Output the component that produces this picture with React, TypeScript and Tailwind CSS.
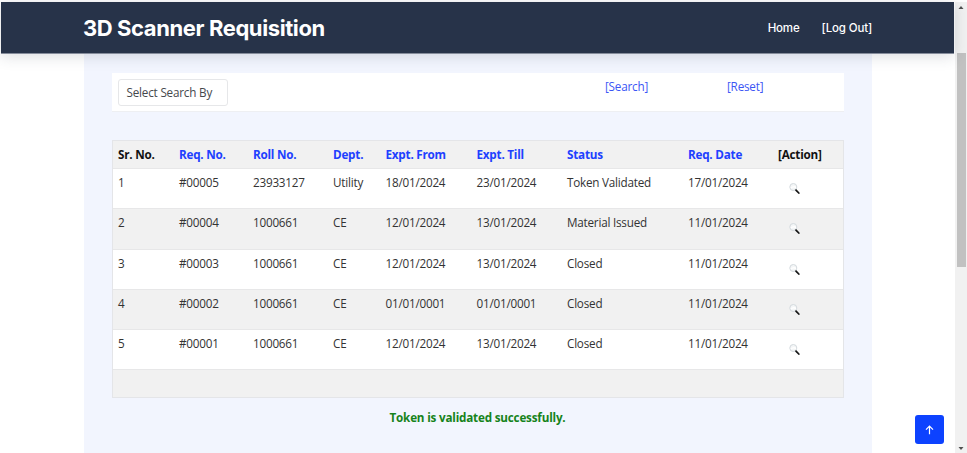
import React from "react";

type Row = {
  req: string;
  roll: string;
  dept: string;
  from: string;
  till: string;
  status: string;
  date: string;
};

const rows: Row[] = [
  { req: "#00005", roll: "23933127", dept: "Utility", from: "18/01/2024", till: "23/01/2024", status: "Token Validated", date: "17/01/2024" },
  { req: "#00004", roll: "1000661", dept: "CE", from: "12/01/2024", till: "13/01/2024", status: "Material Issued", date: "11/01/2024" },
  { req: "#00003", roll: "1000661", dept: "CE", from: "12/01/2024", till: "13/01/2024", status: "Closed", date: "11/01/2024" },
  { req: "#00002", roll: "1000661", dept: "CE", from: "01/01/0001", till: "01/01/0001", status: "Closed", date: "11/01/2024" },
  { req: "#00001", roll: "1000661", dept: "CE", from: "12/01/2024", till: "13/01/2024", status: "Closed", date: "11/01/2024" },
];

const sortable = ["Req. No.", "Roll No.", "Dept.", "Expt. From", "Expt. Till", "Status", "Req. Date"];

const columns = "grid grid-cols-[61px_74px_80px_52.5px_91px_90.5px_121px_90px_1fr] pl-[5px]";

function Magnifier() {
  return (
    <svg width="12" height="12" viewBox="0 0 12 12" className="block">
      <circle cx="4.3" cy="4" r="3.5" fill="#f4f6f7" stroke="#d3d9dd" strokeWidth="1" />
      <path d="M1.8 5.2C3 3.6 5.5 3.4 7 4.6" fill="none" stroke="#ffffff" strokeWidth="1.4" />
      <path d="M6.3 6.5l1 1" stroke="#777b7e" strokeWidth="1.2" />
      <path d="M7.2 7.3l2.6 2.7" stroke="#161616" strokeWidth="1.8" strokeLinecap="round" />
    </svg>
  );
}

function NavBar() {
  return (
    <header className="relative z-10 ml-px flex h-[52px] items-center justify-between border-b border-[#858c9b] bg-[#273349] pr-[82px] pl-[82px] font-[Inter,sans-serif] text-white shadow-[0_2px_14px_rgba(50,60,75,0.18)]">
      <h1 className="text-[22px] leading-none font-bold tracking-[-0.4px] whitespace-nowrap">3D Scanner Requisition</h1>
      <nav className="flex gap-[22px] pt-[2px] text-[11.5px] leading-none font-medium tracking-[-0.15px]">
        <a>Home</a>
        <a>[Log Out]</a>
      </nav>
    </header>
  );
}

function SearchPanel() {
  return (
    <div className="flex h-[39px] border-b border-[#eeeff2] bg-white pl-[6px] text-[11.7px] tracking-[-0.2px]">
      <div className="mt-[6px] flex h-[27px] w-[110px] items-center rounded-[3px] border border-[#e6e7e9] pl-[7.5px] text-[#45484c]">
        Select Search By
      </div>
      <a className="mt-[5px] ml-[377px] w-[122px] leading-4 text-[#3b55f5]">[Search]</a>
      <a className="mt-[5px] leading-4 text-[#3b55f5]">[Reset]</a>
    </div>
  );
}

function RequestTable() {
  return (
    <div className="mt-[28px] border border-[#e4e5e8] text-[11.7px] leading-4 tracking-[-0.22px] text-[#333333]">
      <div className={`${columns} h-[28px] items-center border-b border-[#e7e7e8] bg-[#f1f1f1] pb-[2px] font-bold text-[#2040ff]`}>
        <span className="text-[#111111]">Sr. No.</span>
        {sortable.map((label) => (
          <span key={label}>{label}</span>
        ))}
        <span className="text-[#111111]">[Action]</span>
      </div>
      {rows.map((row, i) => (
        <div
          key={row.req}
          className={`${columns} h-[40.3px] border-b border-[#e7e7e8] pt-[5px] ${i % 2 ? "bg-[#f1f1f1]" : "bg-white"}`}
        >
          <span>{i + 1}</span>
          <span>{row.req}</span>
          <span>{row.roll}</span>
          <span>{row.dept}</span>
          <span>{row.from}</span>
          <span>{row.till}</span>
          <span>{row.status}</span>
          <span>{row.date}</span>
          <span className="pt-[9px] pl-[11px]">
            <Magnifier />
          </span>
        </div>
      ))}
      <div className="h-[27px] bg-[#f1f1f1]" />
    </div>
  );
}

function ScrollBar() {
  return (
    <div className="flex h-[451px] w-[12px] flex-col items-center bg-[#f1f1f1]">
      <svg width="12" height="51" className="block shrink-0">
        <path d="M3.5 7L6 4L8.5 7Z" fill="#505050" />
      </svg>
      <div className="h-[214px] w-[9px] bg-[#c1c1c1]" />
      <svg width="12" height="10" className="mt-auto block shrink-0">
        <path d="M3.5 4L6 7L8.5 4Z" fill="#505050" />
      </svg>
    </div>
  );
}

export default function App() {
  return (
    <div className="relative flex h-[453px] w-[967px] overflow-hidden bg-white pt-[2px] font-['Open_Sans',sans-serif]">
      <div className="w-[954px]">
        <NavBar />
        <main className="ml-[84px] h-[399px] w-[788px] bg-[#f2f5fe] px-[28px] pt-[19px]">
          <SearchPanel />
          <RequestTable />
          <p className="mt-[11px] pr-[1px] text-center text-[11.7px] leading-4 font-bold tracking-[-0.2px] text-[#16831b]">
            Token is validated successfully.
          </p>
        </main>
      </div>
      <div className="ml-px">
        <ScrollBar />
      </div>
      <button className="absolute top-[415px] left-[915px] z-20 flex h-[29px] w-[29px] items-center justify-center rounded-[3px] bg-[#0d42ff]">
        <svg width="9" height="10" viewBox="0 0 9 10" fill="none" stroke="#ffffff" strokeWidth="1.2">
          <path d="M4.5 9.3V1.2M1 4.6L4.5 1.1L8 4.6" />
        </svg>
      </button>
    </div>
  );
}
